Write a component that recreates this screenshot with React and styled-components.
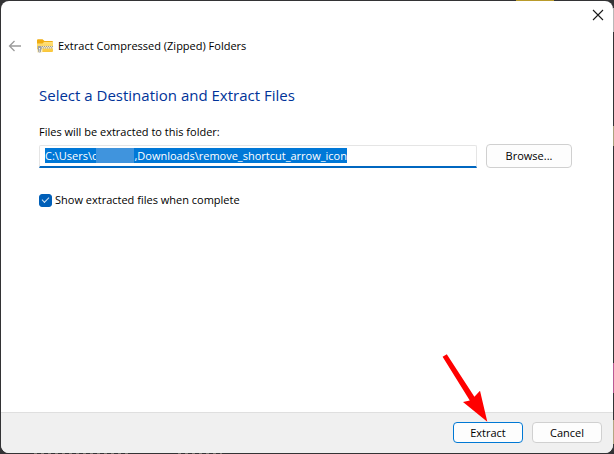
import { useEffect, useRef, useState } from "react";
import styled, { createGlobalStyle } from "styled-components";

const GlobalStyle = createGlobalStyle`
  * {
    box-sizing: border-box;
  }

  body {
    margin: 0;
    background: #333335;
    color: #000;
    font-family: "Open Sans", "Noto Sans", sans-serif;
    font-size: 11px;
    line-height: 16px;
  }

  button, input {
    font: inherit;
  }
`;

function App() {
  const [folder, setFolder] = useState(
    "C:\\Users\\c" + "\u00a0".repeat(13) + ",Downloads\\remove_shortcut_arrow_icon"
  );
  const [showFiles, setShowFiles] = useState(true);
  const folderRef = useRef(null);

  useEffect(() => {
    folderRef.current.focus();
    folderRef.current.select();
  }, []);

  return (
    <Desktop>
      <GlobalStyle />
      <Dialog>
        <TitleBar>
          <IconButton type="button" aria-label="Close">
            <CloseIcon />
          </IconButton>
        </TitleBar>
        <Header>
          <IconButton type="button" aria-label="Back">
            <BackIcon />
          </IconButton>
          <ZipIcon />
          <HeaderText>Extract Compressed (Zipped) Folders</HeaderText>
        </Header>
        <Content>
          <Title>Select a Destination and Extract Files</Title>
          <Label htmlFor="folder">Files will be extracted to this folder:</Label>
          <FolderRow>
            <FolderField>
              <FolderInput
                id="folder"
                ref={folderRef}
                value={folder}
                spellCheck={false}
                onChange={(e) => setFolder(e.target.value)}
              />
              <Redacted />
            </FolderField>
            <BrowseButton type="button">Browse...</BrowseButton>
          </FolderRow>
          <CheckRow>
            <CheckBox
              id="show"
              type="checkbox"
              checked={showFiles}
              onChange={(e) => setShowFiles(e.target.checked)}
            />
            <label htmlFor="show">Show extracted files when complete</label>
          </CheckRow>
        </Content>
        <Footer>
          <Button type="button" $primary>Extract</Button>
          <Button type="button">Cancel</Button>
          <Pointer />
        </Footer>
      </Dialog>
    </Desktop>
  );
}

export default App;

function CloseIcon() {
  return (
    <svg width="12" height="12" viewBox="0 0 12 12" fill="none" stroke="#1a1a1a" strokeWidth="1.1">
      <path d="M1 1l10 10M11 1L1 11" />
    </svg>
  );
}

function BackIcon() {
  return (
    <svg width="14" height="12" viewBox="0 0 14 12" fill="none" stroke="#9b9b9b" strokeWidth="1.3">
      <path d="M6.5 1L1.5 6l5 5M1.5 6H13" />
    </svg>
  );
}

function ZipIcon() {
  return (
    <svg width="16" height="14" viewBox="0 0 16 14">
      <defs>
        <linearGradient id="zip" x1="0" y1="0" x2="0" y2="1">
          <stop offset="0" stopColor="#ffe17d" />
          <stop offset="1" stopColor="#fac638" />
        </linearGradient>
      </defs>
      <path d="M0 1.2Q0 .3 1 .3h4.5L7.5 2H15q1 0 1 1v3H0z" fill="#f0ad12" />
      <path d="M0 4.6h5.5L7 3H16v9.1q0 .9-1 .9H1q-1 0-1-.9z" fill="url(#zip)" />
      <path d="M1 7h15v2.4H1z" fill="#eee4c8" />
      <path d="M1 7.5h15M2 8.9h14" stroke="#99958a" strokeWidth=".9" strokeDasharray="1 1" />
      <path d="M0 10h1.4v3.4H0zM4 10h1.4v3.4H4z" fill="#fff3cc" />
      <path d="M.8 7h3.6v3.3L3.6 13.6H1.6L.8 10.3z" fill="#9da0a4" />
      <path d="M2 9h1v1.6H2zM2 11.6h1v1H2z" fill="#f4f4f4" />
    </svg>
  );
}

function Pointer() {
  return (
    <PointerSvg width="46" height="69" viewBox="0 0 46 69">
      <path d="M.6 2.8L4.8.2 32.4 42.8 38 36.8 45.3 67.8 21 48 27.8 46.6z" fill="#f00" />
    </PointerSvg>
  );
}

const Desktop = styled.main`
  min-height: 100vh;
  display: flex;
  padding: 1px;
  background:
    linear-gradient(#b99b2b, #b99b2b) calc(100% - 60px) 0 / 38px 1px no-repeat,
    linear-gradient(#b8b8b8, #b8b8b8) 100% 8px / 1px 24px no-repeat,
    linear-gradient(#a9a27f, #a9a27f) 100% 126px / 1px 20px no-repeat,
    linear-gradient(#b95b94, #b95b94) 100% 363px / 1px 30px no-repeat,
    linear-gradient(#b3a683, #b3a683) 100% 420px / 1px 24px no-repeat,
    repeating-linear-gradient(90deg, #77736e 0 3px, #333335 3px 7px) 34px 100% / 96px 1px no-repeat,
    repeating-linear-gradient(90deg, #77736e 0 3px, #333335 3px 7px) 178px 100% / 44px 1px no-repeat,
    #333335;
`

const Dialog = styled.section`
  flex: 1;
  display: flex;
  flex-direction: column;
  background: #fff;
  border-radius: 8px;
  overflow: hidden;
`

const TitleBar = styled.div`
  display: flex;
  justify-content: flex-end;
  height: 28px;
  padding-right: 5px;
`

const IconButton = styled.button`
  display: flex;
  align-items: center;
  justify-content: center;
  width: 20px;
  height: 28px;
  padding: 0;
  border: 0;
  background: none;
`

const Header = styled.header`
  display: flex;
  align-items: center;
  height: 34px;
  padding-left: 4px;

  ${IconButton} {
    margin-right: 12px;
  }
`

const HeaderText = styled.span`
  margin-left: 5px;
`

const Content = styled.div`
  flex: 1;
  padding: 21px 41px 24px 38px;
`

const Title = styled.h1`
  margin: 0;
  font-size: 15px;
  font-weight: 400;
  line-height: 22px;
  color: #003399;
`

const Label = styled.label`
  display: block;
  margin-top: 18px;
`

const FolderRow = styled.div`
  display: flex;
  gap: 9px;
  margin-top: 4px;
`

const FolderField = styled.div`
  position: relative;
  flex: 1;
  padding-top: 1px;
`

const FolderInput = styled.input`
  display: block;
  width: 100%;
  height: 23px;
  padding: 0 5px 2px;
  border: 1px solid #e5e5e5;
  border-bottom: 2px solid #0067c0;
  border-radius: 2px 2px 0 0;
  outline: none;
  background: #fff;

  &::selection {
    background: #0078d7;
    color: #fff;
  }
`

/* covers the user name inside the path */
const Redacted = styled.span`
  position: absolute;
  top: 4px;
  left: 57px;
  width: 38px;
  height: 15px;
  background: #4094dd;
`

const Button = styled.button`
  width: 70px;
  height: 21px;
  padding: 0;
  border: 1px solid ${(props) => (props.$primary ? "#0078d4" : "#d0d0d0")};
  border-radius: 4px;
  background: #fdfdfd;
  color: #000;
`

const BrowseButton = styled(Button)`
  width: 86px;
  height: 24px;
`

const CheckRow = styled.div`
  display: flex;
  align-items: center;
  gap: 3px;
  margin-top: 24px;
`

const CheckBox = styled.input`
  appearance: none;
  width: 13px;
  height: 13px;
  margin: 0;
  border: 1px solid #868686;
  border-radius: 3px;
  display: grid;
  place-items: center;

  &:checked {
    border-color: #005fb8;
    background: #005fb8;
  }

  &:checked::after {
    content: "";
    width: 6px;
    height: 3px;
    margin-bottom: 2px;
    border: solid #d5e5f4;
    border-width: 0 0 1px 1px;
    transform: rotate(-45deg);
  }
`

const Footer = styled.footer`
  position: relative;
  display: flex;
  justify-content: flex-end;
  gap: 9px;
  padding: 9px 11px 10px;
  border-top: 1px solid #dfdfdf;
  background: #f0f0f0;
`

/* red arrow laid over the dialog, its tip on the Extract button */
const PointerSvg = styled.svg`
  position: absolute;
  right: 125px;
  top: -59px;
`
